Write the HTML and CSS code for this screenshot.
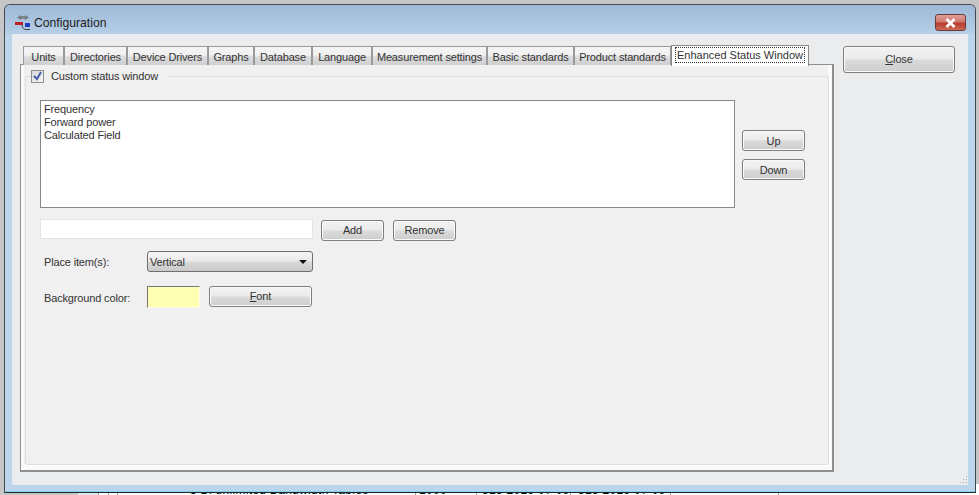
FILE: index.html
```html
<!DOCTYPE html>
<html lang="en">
<head>
<meta charset="utf-8">
<title>Configuration</title>
<link rel="stylesheet" href="styles.css">
</head>
<body>
<div class="desktop">
  <div class="behind">
    <div class="cell c1"></div>
    <div class="cell c2"></div>
    <div class="cell c3"></div>
    <div class="cell c4">3 Bl unlimited Bandwidth Tables</div>
    <div class="cell c5">1000</div>
    <div class="cell c6">315 2019 07 09</div>
    <div class="cell c7">315 2019 07 09</div>
    <div class="cell c8"></div>
    <div class="cell c9"></div>
  </div>
  <div class="window">
    <div class="titlebar">
      <svg class="appicon" width="17" height="16" viewBox="0 0 17 16">
        <path d="M5 2.5h6" stroke="#7d8a8c" stroke-width="3"/>
        <path d="M6 0L2 2.5 6 5zM10 0l4 2.5L10 5z" fill="#6f7d80"/>
        <rect x="0" y="7" width="8" height="3" fill="#c02020"/>
        <rect x="10" y="8" width="5" height="4" fill="#1a3ec0"/>
        <path d="M7 10c0 3 2 4.5 4 4.5h4" fill="none" stroke="#444"/>
      </svg>
      <span class="title">Configuration</span>
      <div class="closex">
        <svg width="13" height="10" viewBox="0 0 13 10"><path d="M2.5 1l8 8M10.5 1l-8 8" stroke="#fff" stroke-width="2.6" fill="none"/></svg>
      </div>
    </div>
    <div class="client">
      <div class="leftpane">
        <div class="tabs">
          <div class="tab w-units">Units</div>
          <div class="tab w-dirs">Directories</div>
          <div class="tab w-dev">Device Drivers</div>
          <div class="tab w-graphs">Graphs</div>
          <div class="tab w-db">Database</div>
          <div class="tab w-lang">Language</div>
          <div class="tab w-meas">Measurement settings</div>
          <div class="tab w-basic">Basic standards</div>
          <div class="tab w-prod">Product standards</div>
          <div class="tab active"><span class="focus">Enhanced Status Window</span></div>
        </div>
        <div class="tabpanel">
          <fieldset class="group">
            <legend class="legend">
              <span class="check"><svg width="9" height="10" viewBox="0 0 9 10"><path d="M1 5l3 3 4-7" fill="none" stroke="#4a5fa8" stroke-width="2"/></svg></span>
              <span>Custom status window</span>
            </legend>
            <div class="listrow">
              <div class="listbox">
                <div>Frequency</div>
                <div>Forward power</div>
                <div>Calculated Field</div>
              </div>
              <div class="updown">
                <div class="btn small">Up</div>
                <div class="btn small">Down</div>
              </div>
            </div>
            <div class="addrow">
              <div class="textbox"></div>
              <div class="btn small">Add</div>
              <div class="btn small">Remove</div>
            </div>
            <div class="placerow">
              <span class="label">Place item(s):</span>
              <div class="select"><span>Vertical</span><span class="arrow"></span></div>
            </div>
            <div class="colorrow">
              <span class="label">Background color:</span>
              <div class="swatch"></div>
              <div class="btn font"><span><u>F</u>ont</span></div>
            </div>
          </fieldset>
        </div>
      </div>
      <div class="rightpane">
        <div class="btn close"><span><u>C</u>lose</span></div>
      </div>
      <svg class="grip" width="9" height="9" viewBox="0 0 9 9"><path d="M7 1h1v1H7zM4 4h1v1H4zM7 4h1v1H7zM1 7h1v1H1zM4 7h1v1H4zM7 7h1v1H7z" fill="#a9adb3"/></svg>
    </div>
  </div>
</div>
</body>
</html>
```
FILE: styles.css
```css
* { box-sizing: border-box; }
html, body { margin: 0; padding: 0; }
body {
  font-family: "Liberation Sans", Arial, sans-serif;
  font-size: 11px;
  letter-spacing: -0.15px;
  color: #333;
}
.desktop {
  position: relative;
  width: 979px;
  height: 495px;
  overflow: hidden;
  background: #c6c6c6;
}
.behind {
  display: flex;
  margin-left: 78px;
  padding-top: 484px;
  height: 495px;
  font-size: 12px;
  line-height: 12px;
  letter-spacing: 0.3px;
  color: #000;
}
.cell {
  flex: none;
  height: 11px;
  background: #fff;
  border-left: 1px solid #999;
  white-space: nowrap;
  overflow: hidden;
}
.c1 { width: 20px; border-left: 0; background: #dfe8f4; }
.c2 { width: 10px; }
.c3 { width: 9px; }
.c4 { width: 298px; padding-left: 72px; }
.c5 { width: 61px; padding-left: 3px; }
.c6 { width: 94px; padding-left: 5px; }
.c7 { width: 100px; padding-left: 7px; }
.c8 { width: 108px; }
.c9 { width: 201px; }
.window {
  position: absolute;
  left: 4px;
  top: 4px;
  width: 972px;
  height: 489px;
  display: flex;
  flex-direction: column;
  border: 1px solid #3f4a52;
  border-bottom-color: #20282c;
  border-radius: 6px 6px 0 0;
  background: #bcd4ec;
  box-shadow: inset 0 -1px 0 #7fd4ee;
}
.titlebar {
  height: 29px;
  flex: none;
  display: flex;
  align-items: center;
  padding: 6px 9px 0 10px;
  border-radius: 5px 5px 0 0;
  background: linear-gradient(#9db9d6, #b6cfe8);
}
.appicon { flex: none; }
.title {
  margin-left: 2px;
  font-size: 12.2px;
  letter-spacing: 0;
  color: #1c1c1c;
}
.closex {
  margin-left: auto;
  width: 31px;
  height: 17px;
  display: flex;
  align-items: center;
  justify-content: center;
  border: 1px solid #6b3a38;
  border-radius: 3px;
  background: linear-gradient(#dfa099 0%, #d0786e 45%, #b83c2e 55%, #cc6a58 100%);
}
.client {
  position: relative;
  flex: none;
  height: 451px;
  margin: 0 7px;
  display: flex;
  background: #ebecee;
}
.leftpane {
  width: 822px;
  flex: none;
  padding: 11px 0 0 8px;
}
.rightpane {
  flex: none;
  padding: 12px 0 0 9px;
}
.tabs {
  position: relative;
  z-index: 1;
  display: flex;
  height: 20px;
  padding-left: 3px;
  margin-bottom: -1px;
  align-items: flex-end;
}
.tab {
  height: 19px;
  flex: none;
  display: flex;
  align-items: center;
  justify-content: center;
  border: 1px solid #9a9a9a;
  border-bottom: 0;
  background: linear-gradient(#f5f5f5, #f0f0f0 45%, #dcdcdc 55%, #cfcfcf);
  white-space: nowrap;
  padding-top: 1px;
}
.w-units { width: 41px; }
.w-dirs { width: 63px; }
.w-dev { width: 81px; }
.w-graphs { width: 46px; }
.w-db { width: 58px; }
.w-lang { width: 60px; }
.w-meas { width: 115px; }
.w-basic { width: 87px; }
.w-prod { width: 97px; }
.tab.active {
  width: 138px;
  height: 21px;
  margin-bottom: -1px;
  background: #fff;
  border-color: #8a8a8a;
  padding: 0 3px 2px;
}
.focus {
  display: block;
  width: 100%;
  text-align: center;
  border: 1px dotted #333;
  line-height: 14px;
  height: 16px;
  letter-spacing: 0;
}
.tabpanel {
  width: 814px;
  height: 408px;
  border: 1px solid #8f8f8f;
  border-right-width: 2px;
  border-bottom-width: 2px;
  background: #f0f0f0;
  box-shadow: inset 3px 0 0 #fafafa, inset -4px -6px 0 #fafafa;
  padding: 4px 3px 3px 4px;
}
.group {
  margin: 0;
  padding: 0 0 0 14px;
  width: 804px;
  height: 396px;
  border: 1px solid #dcdfe2;
  border-radius: 2px;
  background: transparent;
  box-shadow: 1px 1px 0 #fff;
}
.legend {
  margin-left: -9px;
  padding: 0 11px 0 0;
  display: flex;
  align-items: center;
  height: 14px;
}
.check {
  width: 13px;
  height: 13px;
  flex: none;
  margin-right: 7px;
  display: flex;
  align-items: center;
  justify-content: center;
  border: 1px solid #8e8f8f;
  background: linear-gradient(135deg, #d8d8d8, #f6f6f6);
}
.listrow {
  display: flex;
  margin-top: 17px;
}
.listbox {
  width: 695px;
  height: 108px;
  flex: none;
  padding: 2px 3px;
  border: 1px solid #868686;
  background: #fff;
  line-height: 13px;
}
.updown {
  display: flex;
  flex-direction: column;
  gap: 8px;
  margin: 30px 0 0 7px;
}
.btn {
  display: flex;
  align-items: center;
  justify-content: center;
  flex: none;
  border: 1px solid #7e7e7e;
  border-radius: 3px;
  background: linear-gradient(#f3f3f3, #ebebeb 45%, #dadada 55%, #cdcdcd);
  box-shadow: inset 0 0 0 1px #fafafa;
}
.btn.small {
  width: 63px;
  height: 21px;
}
.addrow {
  display: flex;
  align-items: flex-start;
  gap: 9px;
  margin-top: 11px;
}
.addrow .btn {
  margin-top: 1px;
  padding-bottom: 1px;
}
.textbox {
  width: 273px;
  height: 20px;
  margin-right: -1px;
  background: #fff;
  border: 1px solid #e4e5e7;
}
.placerow {
  display: flex;
  align-items: center;
  margin-top: 10px;
  padding-left: 4px;
}
.label {
  width: 103px;
  flex: none;
}
.select {
  width: 166px;
  height: 21px;
  display: flex;
  align-items: center;
  justify-content: space-between;
  padding: 0 5px 0 2px;
  border: 1px solid #6f6f6f;
  border-radius: 3px;
  background: linear-gradient(#f4f4f4, #ebebeb 45%, #d8d8d8 55%, #cbcbcb);
}
.arrow {
  width: 0;
  height: 0;
  border-left: 4px solid transparent;
  border-right: 4px solid transparent;
  border-top: 4px solid #111;
}
.colorrow {
  display: flex;
  align-items: flex-start;
  margin-top: 14px;
  padding-left: 4px;
}
.colorrow .label { padding-top: 6px; }
.swatch {
  width: 53px;
  height: 22px;
  flex: none;
  background: #ffffb4;
  border: 1px solid #fbfbf0;
  border-top-color: #767676;
  border-left-color: #767676;
}
.btn.font {
  width: 103px;
  height: 21px;
  margin-left: 9px;
  padding-bottom: 1px;
}
.btn.close {
  width: 112px;
  height: 27px;
  padding-bottom: 1px;
}
.grip {
  position: absolute;
  right: 0;
  bottom: 1px;
}
```
